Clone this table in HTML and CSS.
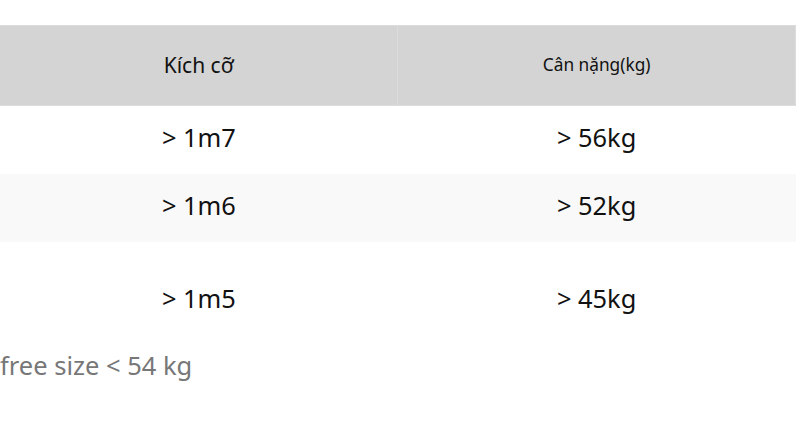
FILE: index.html
```html
<!DOCTYPE html>
<html lang="vi">
<head>
<meta charset="utf-8">
<link rel="stylesheet" href="styles.css">
</head>
<body>
<div class="wrap">
  <table class="size-table">
    <thead>
      <tr>
        <th class="h-big">Kích cỡ</th>
        <th class="h-small">Cân nặng(kg)</th>
      </tr>
    </thead>
    <tbody>
      <tr class="r1"><td>&gt; 1m7</td><td>&gt; 56kg</td></tr>
      <tr class="r2"><td>&gt; 1m6</td><td>&gt; 52kg</td></tr>
      <tr class="r3"><td>&gt; 1m5</td><td>&gt; 45kg</td></tr>
    </tbody>
  </table>
  <p class="note">free size &lt; 54 kg</p>
</div>
</body>
</html>
```
FILE: styles.css
```css
html, body {
  margin: 0;
  padding: 0;
  background: #fff;
}
body {
  font-family: "Noto Sans", "Open Sans", sans-serif;
  color: #111;
}
.wrap {
  padding-top: 25px;
}
.size-table {
  width: 796px;
  border-collapse: collapse;
  table-layout: fixed;
}
.size-table th {
  background: #d4d4d4;
  height: 77px;
  padding: 0 0 2px;
  font-weight: 400;
  border: 1px solid #dcdcdc;
  text-align: center;
}
.size-table th:first-child {
  border-left: none;
}
.h-big {
  font-size: 21px;
}
.h-small {
  font-size: 17.3px;
}
.size-table td {
  text-align: center;
  font-size: 25.4px;
  padding: 0 0 7px;
}
.r1 td {
  height: 61px;
  background: #fff;
}
.r2 td {
  height: 61px;
  background: #f9f9f9;
}
.r3 td {
  height: 112px;
  background: #fff;
}
.note {
  margin: -13px 0 0;
  font-size: 25.5px;
  color: #777;
}
```
